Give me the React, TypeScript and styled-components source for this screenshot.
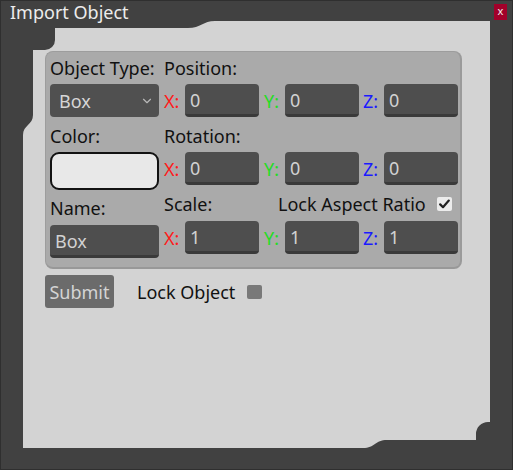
import React from 'react';
import styled, { createGlobalStyle } from 'styled-components';
import { ChevronDown } from 'lucide-react';

const GlobalStyle = createGlobalStyle`
  html, body {
    margin: 0;
    padding: 0;
    background: #414141;
  }
  * {
    box-sizing: border-box;
  }
`;

const font = `'Noto Sans', 'Open Sans', sans-serif`;

const Window = styled.div`
  width: 513px;
  height: 470px;
  background: #414141;
  border: 1px solid #2f2f2f;
  display: flex;
  flex-direction: column;
  font-family: ${font};
  overflow: hidden;
`;

const TitleBar = styled.div`
  height: 20px;
  display: flex;
  align-items: flex-start;
  justify-content: space-between;
  padding: 0 5px 0 9px;
`;

const Title = styled.div`
  color: #ececec;
  font-size: 18px;
  line-height: 22px;
`;

const CloseButton = styled.div`
  width: 13px;
  height: 16px;
  margin-top: 3px;
  background: #a2002a;
  color: #f0f0f0;
  font-size: 11px;
  line-height: 14px;
  text-align: center;
`;

// light area with the odd notched corners of the theme texture
const Panel = styled.div`
  width: 467px;
  height: 427px;
  margin: 0 22px;
  background: #d3d3d3;
  padding: 30px 0 0 22px;
  clip-path: path('M 32 7 L 165 7 C 178 7 180 0 192 0 L 467 0 L 467 401 L 465 401 A 12 12 0 0 0 453 413 L 453 419 L 364 419 C 352 419 352 427 340 427 L 0 427 L 0 114 C 0 104 10 104 10 94 L 10 29 L 22 29 A 10 10 0 0 0 32 19 Z');
`;

const GroupBox = styled.div`
  width: 417px;
  height: 218px;
  background: #aaaaaa;
  border-radius: 8px;
  border: 1px solid #9d9d9d;
  border-bottom: 2px solid #989898;
  border-right: 2px solid #9a9a9a;
  display: flex;
  gap: 5px;
  padding: 5px 0 0 4px;
`;

const Column = styled.div<{ $width?: number }>`
  display: flex;
  flex-direction: column;
  width: ${({ $width }) => ($width ? `${$width}px` : 'auto')};
`;

const Label = styled.div<{ $top?: number; $width?: number }>`
  font-family: ${font};
  font-size: 18px;
  line-height: 22px;
  color: #111;
  margin-top: ${({ $top }) => $top ?? 0}px;
  width: ${({ $width }) => ($width ? `${$width}px` : 'auto')};
  white-space: nowrap;
`;

const Select = styled.div<{ $top?: number }>`
  height: 33px;
  margin-top: ${({ $top }) => $top ?? 0}px;
  background: #505050;
  border-radius: 4px;
  display: flex;
  align-items: center;
  justify-content: space-between;
  padding: 0 5px 0 9px;
  color: #d6d6d6;
  font-size: 18px;
`;

const Swatch = styled.div<{ $top?: number }>`
  height: 38px;
  margin-top: ${({ $top }) => $top ?? 0}px;
  background: #e8e8e8;
  border: 2px solid #121212;
  border-radius: 9px;
`;

const TextInput = styled.input<{ $width: number; $top?: number }>`
  width: ${({ $width }) => $width}px;
  height: 33px;
  margin-top: ${({ $top }) => $top ?? 0}px;
  background: #4e4e4e;
  border: none;
  border-bottom: 3px solid #3a3a3a;
  border-radius: 4px;
  color: #d2d2d2;
  font-family: ${font};
  font-size: 18px;
  padding: 2px 0 0 5px;
  outline: none;
`;

const AxisRow = styled.div<{ $top?: number }>`
  display: flex;
  align-items: center;
  margin-top: ${({ $top }) => $top ?? 0}px;
`;

const AxisLabel = styled.span<{ $color: string; $gap?: number }>`
  width: 21px;
  margin-left: ${({ $gap }) => $gap ?? 0}px;
  color: ${({ $color }) => $color};
  font-size: 18px;
  line-height: 22px;
`;

const LabelRow = styled.div<{ $top?: number }>`
  display: flex;
  align-items: center;
  margin-top: ${({ $top }) => $top ?? 0}px;
`;

const CheckBox = styled.div<{ $checked?: boolean; $left: number }>`
  width: 15px;
  height: 14px;
  margin-left: ${({ $left }) => $left}px;
  border-radius: 2px;
  background: ${({ $checked }) => ($checked ? '#ececec' : '#797979')};
  display: flex;
  align-items: center;
  justify-content: center;
`;

const Footer = styled.div`
  display: flex;
  align-items: center;
  margin-top: 6px;
`;

const SubmitButton = styled.button`
  width: 69px;
  height: 33px;
  background: #6b6b6b;
  border: none;
  border-radius: 3px;
  color: #d4d4d4;
  font-family: ${font};
  font-size: 18px;
  padding: 0;
  margin-right: 23px;
`;

const Check = () => (
  <svg width="11" height="10" viewBox="0 0 11 10">
    <path d="M1.2 5.4 L4 8.2 L9.8 1.6" fill="none" stroke="#222" strokeWidth="2.2" strokeLinecap="round" strokeLinejoin="round" />
  </svg>
);

const axes = [
  { name: 'X', color: '#ff1a1a' },
  { name: 'Y', color: '#22dd22' },
  { name: 'Z', color: '#1a1aff' },
];

const VectorRow = ({ value, top }: { value: string; top?: number }) => (
  <AxisRow $top={top}>
    {axes.map((axis, i) => (
      <React.Fragment key={axis.name}>
        <AxisLabel $color={axis.color} $gap={i === 0 ? 0 : i === 1 ? 5 : 4}>{axis.name}:</AxisLabel>
        <TextInput $width={74} defaultValue={value} readOnly />
      </React.Fragment>
    ))}
  </AxisRow>
);

export default function App() {
  return (
    <>
      <GlobalStyle />
      <Window>
        <TitleBar>
          <Title>Import Object</Title>
          <CloseButton>x</CloseButton>
        </TitleBar>
        <Panel>
          <GroupBox>
            <Column $width={109}>
              <Label>Object Type:</Label>
              <Select $top={5}>
                <span>Box</span>
                <ChevronDown size={14} color="#b8b8b8" strokeWidth={2} />
              </Select>
              <Label $top={8}>Color:</Label>
              <Swatch $top={5} />
              <Label $top={7}>Name:</Label>
              <TextInput $width={109} $top={6} defaultValue="Box" readOnly />
            </Column>
            <Column>
              <Label>Position:</Label>
              <VectorRow value="0" top={5} />
              <Label $top={8}>Rotation:</Label>
              <VectorRow value="0" top={5} />
              <LabelRow $top={8}>
                <Label $width={114}>Scale:</Label>
                <Label>Lock Aspect Ratio</Label>
                <CheckBox $checked $left={11}>
                  <Check />
                </CheckBox>
              </LabelRow>
              <VectorRow value="1" top={6} />
            </Column>
          </GroupBox>
          <Footer>
            <SubmitButton>Submit</SubmitButton>
            <Label>Lock Object</Label>
            <CheckBox $left={12} />
          </Footer>
        </Panel>
      </Window>
    </>
  );
}
